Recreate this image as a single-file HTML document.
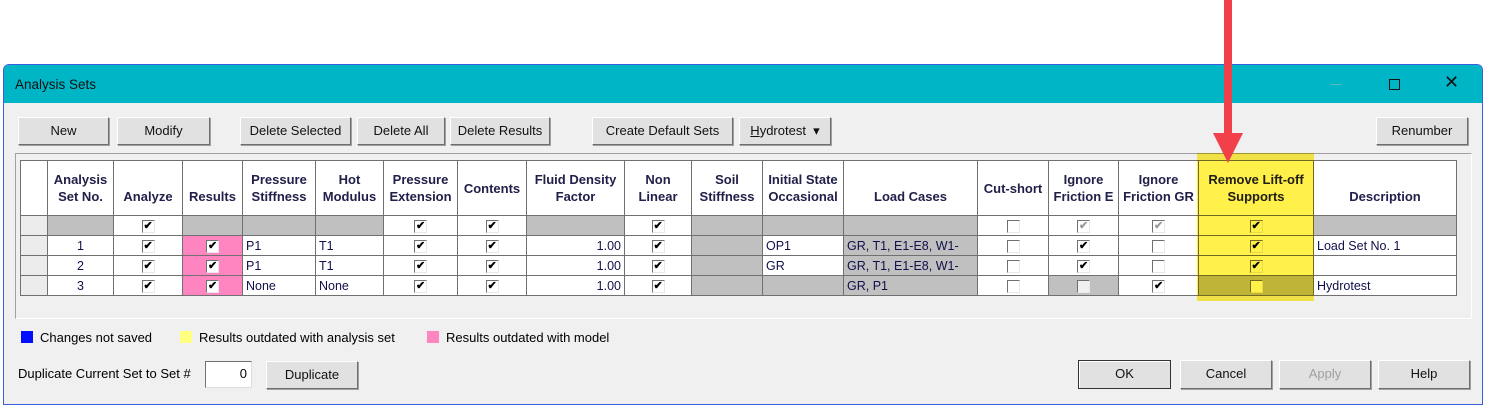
<!DOCTYPE html>
<html><head><meta charset="utf-8"><style>
*{margin:0;padding:0;box-sizing:border-box}
body{width:1486px;height:406px;background:#fff;position:relative;overflow:hidden;font-family:"Liberation Sans",Arial,sans-serif;font-size:13px;color:#000}
.a{position:absolute}
.win{left:3px;top:64px;width:1480px;height:341px;border:1px solid #3b5ee0;background:#f0f0f0;border-radius:6px 6px 0 0}
.title{left:4px;top:65px;width:1478px;height:38px;background:#00b5c5;border-radius:5px 5px 0 0}
.btn{position:absolute;background:#e1e1e1;border:1px solid;border-color:#fff #6e6e6e #6e6e6e #fff;box-shadow:1px 1px 0 #a0a0a0;text-align:center;font-size:13px;line-height:26px;color:#111}
table{position:absolute;left:20px;top:160px;border-collapse:collapse;table-layout:fixed}
td{border:1px solid #707070;height:20px;padding:0 3px;font-size:12.5px;color:#10104a;white-space:nowrap;overflow:hidden}
tr.h td{height:55px;background:#fff;font-weight:bold;text-align:center;line-height:17px;color:#20204a;font-size:13px}
.g{background:#c0c0c0}.w{background:#fff}.p{background:#ff85c0}.rh{background:#ececec}
.c{text-align:center}.r{text-align:right}
.cb{display:inline-block;width:13px;height:13px;border:1px solid;border-color:#707070 #e8e8e8 #e8e8e8 #707070;background:#fff;vertical-align:middle;position:relative;font-size:11px;line-height:11px;text-align:center;color:#000;font-weight:bold}
.cb.k::after{content:"✔";position:absolute;left:1px;top:0;font-size:11px}
.cb.dk::after{content:"✔";position:absolute;left:1px;top:0;font-size:11px;color:#999}
</style></head><body>
<div class="a win"></div>
<div class="a title"></div>
<div class="a" style="left:15px;top:77px;font-size:13.5px;color:#111">Analysis Sets</div>
<div class="a" style="left:1330px;top:84px;width:11px;height:1px;background:#5bb"></div>
<div class="a" style="left:1389px;top:79px;width:11px;height:11px;border:1px solid #111"></div>
<div class="a" style="left:1444px;top:72px;font-size:18px;color:#111">✕</div>

<div class="btn" style="left:18px;top:117px;width:91px;height:28px">New</div>
<div class="btn" style="left:117px;top:117px;width:93px;height:28px">Modify</div>
<div class="btn" style="left:240px;top:117px;width:111px;height:28px">Delete Selected</div>
<div class="btn" style="left:357px;top:117px;width:88px;height:28px">Delete All</div>
<div class="btn" style="left:450px;top:117px;width:100px;height:28px">Delete Results</div>
<div class="btn" style="left:592px;top:117px;width:141px;height:28px">Create Default Sets</div>
<div class="btn" style="left:739px;top:117px;width:92px;height:28px"><u>H</u>ydrotest &nbsp;▾</div>
<div class="btn" style="left:1376px;top:117px;width:92px;height:28px">Renumber</div>

<div class="a" style="left:15px;top:153px;width:1457px;height:166px;border:1px solid;border-color:#a0a0a0 #fff #fff #a0a0a0"></div>

<table>
<colgroup><col style="width:27px"><col style="width:66px"><col style="width:69px"><col style="width:60px"><col style="width:73px"><col style="width:68px"><col style="width:74px"><col style="width:69px"><col style="width:98px"><col style="width:67px"><col style="width:71px"><col style="width:81px"><col style="width:134px"><col style="width:71px"><col style="width:70px"><col style="width:80px"><col style="width:115px"><col style="width:143px"></colgroup>
<tr class="h"><td class="rh"></td><td>Analysis<br>Set No.</td><td><br>Analyze</td><td><br>Results</td><td>Pressure<br>Stiffness</td><td>Hot<br>Modulus</td><td>Pressure<br>Extension</td><td>Contents</td><td>Fluid Density<br>Factor</td><td>Non<br>Linear</td><td>Soil<br>Stiffness</td><td>Initial State<br>Occasional</td><td><br>Load Cases</td><td>Cut-short</td><td>Ignore<br>Friction E</td><td>Ignore<br>Friction GR</td><td>Remove Lift-off<br>Supports</td><td><br>Description</td></tr>
<tr><td class="rh"></td><td class="g"></td><td class="w c"><span class="cb k"></span></td><td class="g"></td><td class="g"></td><td class="g"></td><td class="w c"><span class="cb k"></span></td><td class="w c"><span class="cb k"></span></td><td class="g"></td><td class="w c"><span class="cb k"></span></td><td class="g"></td><td class="g"></td><td class="g"></td><td class="w c"><span class="cb"></span></td><td class="w c"><span class="cb dk"></span></td><td class="w c"><span class="cb dk"></span></td><td class="w c"><span class="cb k"></span></td><td class="g"></td></tr>
<tr><td class="rh"></td><td class="w c">1</td><td class="w c"><span class="cb k"></span></td><td class="p c"><span class="cb k"></span></td><td class="w">P1</td><td class="w">T1</td><td class="w c"><span class="cb k"></span></td><td class="w c"><span class="cb k"></span></td><td class="w r">1.00</td><td class="w c"><span class="cb k"></span></td><td class="g"></td><td class="w">OP1</td><td class="g">GR, T1, E1-E8, W1-</td><td class="w c"><span class="cb"></span></td><td class="w c"><span class="cb k"></span></td><td class="w c"><span class="cb"></span></td><td class="w c"><span class="cb k"></span></td><td class="w">Load Set No. 1</td></tr>
<tr><td class="rh"></td><td class="w c">2</td><td class="w c"><span class="cb k"></span></td><td class="p c"><span class="cb k"></span></td><td class="w">P1</td><td class="w">T1</td><td class="w c"><span class="cb k"></span></td><td class="w c"><span class="cb k"></span></td><td class="w r">1.00</td><td class="w c"><span class="cb k"></span></td><td class="g"></td><td class="w">GR</td><td class="g">GR, T1, E1-E8, W1-</td><td class="w c"><span class="cb"></span></td><td class="w c"><span class="cb k"></span></td><td class="w c"><span class="cb"></span></td><td class="w c"><span class="cb k"></span></td><td class="w"></td></tr>
<tr><td class="rh"></td><td class="w c">3</td><td class="w c"><span class="cb k"></span></td><td class="p c"><span class="cb k"></span></td><td class="w">None</td><td class="w">None</td><td class="w c"><span class="cb k"></span></td><td class="w c"><span class="cb k"></span></td><td class="w r">1.00</td><td class="w c"><span class="cb k"></span></td><td class="g"></td><td class="g"></td><td class="g">GR, P1</td><td class="w c"><span class="cb"></span></td><td class="g c"><span class="cb" style="background:#f0f0f0"></span></td><td class="w c"><span class="cb k"></span></td><td class="g c"><span class="cb"></span></td><td class="w">Hydrotest</td></tr>
</table>
<div class="a" style="left:1197px;top:153px;width:117px;height:148px;background:#fff04a;mix-blend-mode:multiply"></div>
<div class="a" style="left:1224px;top:0;width:8px;height:136px;background:#f2404a"></div>
<div class="a" style="left:1213px;top:133px;width:0;height:0;border-left:15px solid transparent;border-right:15px solid transparent;border-top:30px solid #f2404a"></div>

<div class="a" style="left:21px;top:331px;width:12px;height:12px;background:#0010ff"></div>
<div class="a" style="left:40px;top:330px">Changes not saved</div>
<div class="a" style="left:180px;top:331px;width:12px;height:12px;background:#ffff80"></div>
<div class="a" style="left:199px;top:330px">Results outdated with analysis set</div>
<div class="a" style="left:427px;top:331px;width:12px;height:12px;background:#ff85c0"></div>
<div class="a" style="left:446px;top:330px">Results outdated with model</div>

<div class="a" style="left:18px;top:366px">Duplicate Current Set to Set #</div>
<div class="a" style="left:205px;top:361px;width:47px;height:27px;background:#fff;border:1px solid;border-color:#707070 #ddd #ddd #707070;text-align:right;padding-right:4px;line-height:24px">0</div>
<div class="btn" style="left:266px;top:361px;width:92px;height:28px">Duplicate</div>

<div class="btn" style="left:1078px;top:360px;width:93px;height:29px;border:1px solid #333;box-shadow:inset 1px 1px 0 #fff">OK</div>
<div class="btn" style="left:1180px;top:360px;width:92px;height:29px">Cancel</div>
<div class="btn" style="left:1279px;top:360px;width:92px;height:29px;color:#a0a0a0">Apply</div>
<div class="btn" style="left:1378px;top:360px;width:92px;height:29px">Help</div>
</body></html>
